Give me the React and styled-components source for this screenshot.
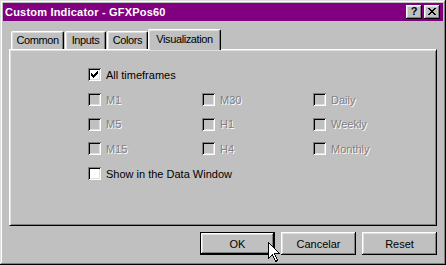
import styled, { createGlobalStyle } from 'styled-components';

const GlobalStyle = createGlobalStyle`
    html, body {
        margin: 0;
        padding: 0;
        background: #c0c0c0;
    }
    * {
        box-sizing: border-box;
    }
`;

// width of each tab as in the dialog
const tabs = [
    { name: 'Common', width: 53 },
    { name: 'Inputs', width: 41 },
    { name: 'Colors', width: 41 },
    { name: 'Visualization', width: 73 },
];

const periods = [
    ['M1', 'M30', 'Daily'],
    ['M5', 'H1', 'Weekly'],
    ['M15', 'H4', 'Monthly'],
];

const CheckMark = () => (
    <svg width="7" height="7" viewBox="0 0 7 7" shapeRendering="crispEdges">
        <path d="M6 0h1v3h-1v1h-1v1h-1v1h-1v1h-1v-1h-1v-1h-1v-3h1v1h1v1h1v-1h1v-1h1z" fill="#000" />
    </svg>
);

const CheckBox = ({ label, checked, disabled }) => (
    <Option>
        <Box $disabled={disabled}>{checked && <CheckMark />}</Box>
        <Label $disabled={disabled}>{label}</Label>
    </Option>
);

const App = () => {
    return (
        <>
            <GlobalStyle />
            <Window>
                <TitleBar>
                    <Title>Custom Indicator - GFXPos60</Title>
                    <TitleButtons>
                        <TitleButton>?</TitleButton>
                        <TitleButton>
                            <svg width="8" height="7" viewBox="0 0 8 7" shapeRendering="crispEdges">
                                <path
                                    d="M0 0h2v1h1v1h2v-1h1v-1h2v1h-1v1h-1v1h-1v1h1v1h1v1h1v1h-2v-1h-1v-1h-2v1h-1v1h-2v-1h1v-1h1v-1h1v-1h-1v-1h-1v-1h-1z"
                                    fill="#000"
                                />
                            </svg>
                        </TitleButton>
                    </TitleButtons>
                </TitleBar>
                <Body>
                    <TabStrip>
                        {tabs.map((t) => (
                            <Tab key={t.name} $width={t.width} $active={t.name === 'Visualization'}>
                                {t.name}
                            </Tab>
                        ))}
                    </TabStrip>
                    <Panel>
                        <CheckBox label="All timeframes" checked />
                        <Grid>
                            {periods.flat().map((p) => (
                                <CheckBox key={p} label={p} disabled />
                            ))}
                        </Grid>
                        <CheckBox label="Show in the Data Window" />
                    </Panel>
                    <Buttons>
                        <Button $default>OK</Button>
                        <Button>Cancelar</Button>
                        <Button>Reset</Button>
                    </Buttons>
                </Body>
                <Cursor width="12" height="20" viewBox="0 0 12 20" shapeRendering="crispEdges">
                    <path
                        d="M0.5 0.5 L0.5 16.5 L4.5 12.5 L7.5 19.5 L9.5 18.5 L6.5 11.5 L11.5 11.5 Z"
                        fill="#fff"
                        stroke="#000"
                        strokeWidth="1"
                    />
                </Cursor>
            </Window>
        </>
    );
};

export default App;

const Window = styled.div`
    position: relative;
    display: flex;
    flex-direction: column;
    width: 446px;
    height: 265px;
    padding: 3px;
    background: #c0c0c0;
    box-shadow: inset -1px -1px #000, inset 1px 1px #dfdfdf, inset -2px -2px #808080,
        inset 2px 2px #fff;
    font-family: 'Liberation Sans', Arial, sans-serif;
    font-size: 11px;
    color: #000;
`;

const TitleBar = styled.div`
    display: flex;
    align-items: center;
    justify-content: space-between;
    height: 18px;
    padding: 0 3px 0 2px;
    background: #800080;
`;

const Title = styled.div`
    color: #fff;
    font-weight: 700;
    font-size: 11px;
    letter-spacing: 0.2px;
`;

const TitleButtons = styled.div`
    display: flex;
    gap: 2px;
`;

const TitleButton = styled.div`
    display: flex;
    align-items: center;
    justify-content: center;
    width: 16px;
    height: 14px;
    background: #c0c0c0;
    box-shadow: inset -1px -1px #000, inset 1px 1px #fff, inset -2px -2px #808080,
        inset 2px 2px #dfdfdf;
    font-weight: 700;
    font-size: 11px;
    line-height: 1;
    padding-bottom: 1px;
`;

const Body = styled.div`
    display: flex;
    flex-direction: column;
    flex: 1;
    padding: 8px 6px 7px;
`;

const TabStrip = styled.div`
    display: flex;
    align-items: flex-end;
    gap: 1px;
    height: 20px;
    padding-left: 2px;
`;

const Tab = styled.div`
    position: relative;
    display: flex;
    align-items: center;
    justify-content: center;
    flex: 0 0 auto;
    width: ${({ $width }) => $width}px;
    height: ${({ $active }) => ($active ? '21px' : '18px')};
    margin-bottom: ${({ $active }) => ($active ? '-1px' : '0')};
    margin-left: ${({ $active }) => ($active ? '-1px' : '0')};
    padding-bottom: ${({ $active }) => ($active ? '2px' : '1px')};
    z-index: ${({ $active }) => ($active ? 1 : 0)};
    background: #c0c0c0;
    border: 1px solid;
    border-color: #fff #000 transparent #fff;
    border-bottom: none;
    border-radius: 2px 2px 0 0;
    box-shadow: inset -1px 0 #808080, inset 1px 1px #dfdfdf;
    letter-spacing: -0.4px;
    white-space: nowrap;
`;

const Panel = styled.div`
    display: flex;
    flex-direction: column;
    gap: 12px;
    height: 177px;
    padding: 18px 0 0 78px;
    border: 1px solid;
    border-color: #fff #000 #000 #fff;
    box-shadow: inset 1px 1px #dfdfdf, inset -1px -1px #808080;
`;

const Grid = styled.div`
    display: grid;
    grid-template-columns: 114px 111px auto;
    row-gap: 11.5px;
`;

const Option = styled.div`
    display: flex;
    align-items: center;
    gap: 5px;
    height: 13px;
`;

const Box = styled.div`
    display: flex;
    align-items: center;
    justify-content: center;
    flex: 0 0 auto;
    width: 13px;
    height: 13px;
    background: ${({ $disabled }) => ($disabled ? '#c0c0c0' : '#fff')};
    box-shadow: inset 1px 1px #808080, inset -1px -1px #fff, inset 2px 2px #000,
        inset -2px -2px #dfdfdf;
`;

const Label = styled.span`
    white-space: nowrap;
    color: ${({ $disabled }) => ($disabled ? '#808080' : '#000')};
    text-shadow: ${({ $disabled }) => ($disabled ? '1px 1px #fff' : 'none')};
`;

const Buttons = styled.div`
    display: flex;
    justify-content: flex-end;
    gap: 6px;
    margin-top: 6px;
`;

const Button = styled.div`
    display: flex;
    align-items: center;
    justify-content: center;
    width: 75px;
    height: 23px;
    background: #c0c0c0;
    border: ${({ $default }) => ($default ? '1px solid #000' : 'none')};
    box-shadow: inset -1px -1px #000, inset 1px 1px #fff, inset -2px -2px #808080,
        inset 2px 2px #dfdfdf;
`;

const Cursor = styled.svg`
    position: absolute;
    left: 268px;
    top: 242px;
`;
